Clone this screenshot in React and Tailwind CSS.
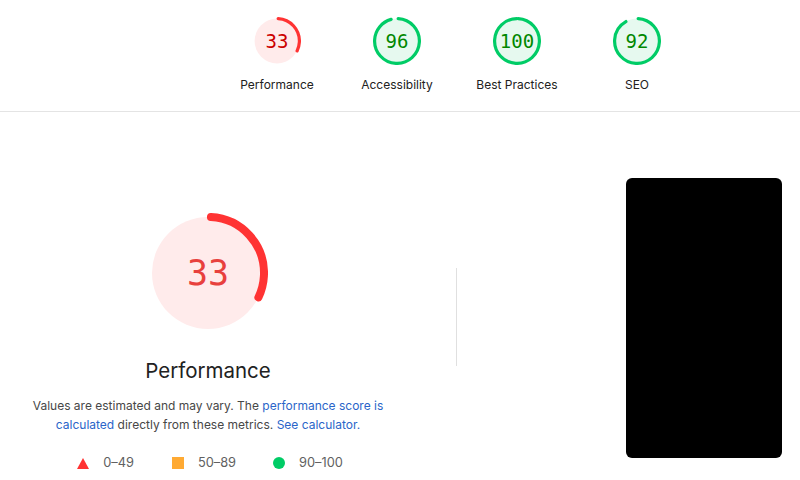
import React from 'react';

const C = 2 * Math.PI * 56;

const palette = {
    fail: { stroke: '#ff3333', bg: '#ffebeb', text: '#cc0000' },
    pass: { stroke: '#00cc66', bg: '#e6f9ef', text: '#008800' },
};

const Gauge = ({ score, size, tone, textClass }) => {
    const p = palette[tone];
    return (
        <div className="relative flex items-center justify-center" style={{ width: size, height: size }}>
            <svg viewBox="0 0 120 120" width={size} height={size} className="absolute inset-0">
                <circle cx="60" cy="60" r="56" fill={p.bg} />
                <circle
                    cx="60" cy="60" r="56" fill="none" stroke={p.stroke} strokeWidth="8" strokeLinecap="round"
                    strokeDasharray={`${(score / 100) * C - 6} ${C}`}
                    transform="rotate(-87 60 60)"
                />
            </svg>
            <span className={`relative ${textClass}`} style={{ color: p.text }}>{score}</span>
        </div>
    );
};

const categories = [
    { label: 'Performance', score: 33, tone: 'fail' },
    { label: 'Accessibility', score: 96, tone: 'pass' },
    { label: 'Best Practices', score: 100, tone: 'pass' },
    { label: 'SEO', score: 92, tone: 'pass' },
];

const App = () => {
    return (
        <div className="w-[800px] h-[480px] overflow-hidden bg-white font-['Inter',sans-serif] text-[#212121]">
            {/* Score header */}
            <div className="h-[112px] border-b border-[#e4e4e4] flex pl-[217px] pt-[17px]">
                {categories.map(c => (
                    <div key={c.label} className="w-[120px] flex flex-col items-center">
                        <Gauge score={c.score} size={48} tone={c.tone} textClass="font-['DejaVu_Sans_Mono',monospace] text-[19px]" />
                        <span className="mt-[12px] text-[12px] leading-[16px] text-[#212121]">{c.label}</span>
                    </div>
                ))}
            </div>

            <div className="flex items-start">
                {/* Performance summary */}
                <div className="w-[416px] flex flex-col items-center pt-[101px]">
                    <Gauge score={33} size={120} tone="fail" textClass="font-['DejaVu_Sans_Mono',monospace] text-[35px] !text-[#e8403d]" />
                    <h2 className="mt-[25px] text-[20.5px] leading-[26px] text-[#212121]">Performance</h2>
                    <p className="mt-[12px] w-[360px] text-center text-[12px] leading-[19px] text-[#474747]">
                        Values are estimated and may vary. The <span className="text-[#2a65c9]">performance score is calculated</span> directly from these metrics. <span className="text-[#2a65c9]">See calculator.</span>
                    </p>
                    <div className="mt-[21px] flex items-center pl-[4px] text-[12.8px] leading-[16px] text-[#616161]">
                        <div className="flex items-center gap-[14px]">
                            <svg width="12" height="11" viewBox="0 0 12 11"><polygon points="6,0 12,11 0,11" fill="#ff3333" /></svg>
                            <span>0–49</span>
                        </div>
                        <div className="flex items-center gap-[14px] ml-[38px]">
                            <span className="w-[12px] h-[12px] bg-[#ffaa33]" />
                            <span>50–89</span>
                        </div>
                        <div className="flex items-center gap-[14px] ml-[37px]">
                            <span className="w-[12px] h-[12px] rounded-full bg-[#00cc66]" />
                            <span>90–100</span>
                        </div>
                    </div>
                </div>

                {/* Divider */}
                <div className="ml-[40px] mt-[156px] w-px h-[98px] bg-[#e0e0e0]" />

                {/* Screenshot */}
                <div className="ml-[169px] mt-[66px] w-[156px] h-[280px] rounded-[6px] bg-black" />
            </div>
        </div>
    );
};

export default App;
